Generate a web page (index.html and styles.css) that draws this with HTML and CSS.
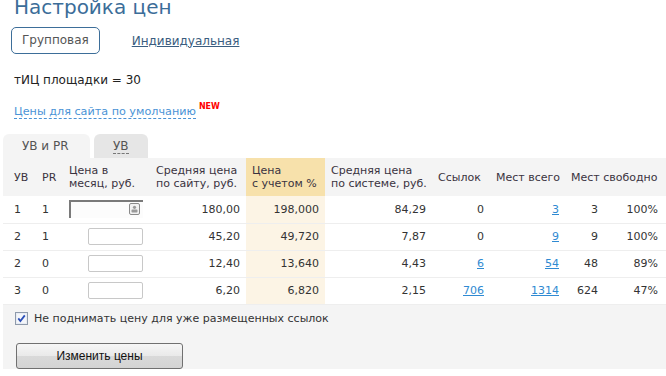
FILE: index.html
```html
<html>
<head>
  <link rel="stylesheet" href="styles.css">
</head>
<body>
  <div class="page-head">
    <h1 class="page-title">Настройка цен</h1>

    <!-- Mode switch -->
    <div class="mode-switch">
      <span class="mode-btn">Групповая</span>
      <a class="mode-link" href="#">Индивидуальная</a>
    </div>

    <p class="tic">тИЦ площадки = 30</p>
    <p class="defaults"><a class="dash-link" href="#">Цены для сайта по умолчанию</a><sup class="new">NEW</sup></p>
  </div>

  <!-- Tabs -->
  <div class="tabs">
    <div class="tab tab-active">УВ и PR</div>
    <div class="tab"><span class="tab-dash">УВ</span></div>
  </div>

  <!-- Price table -->
  <table class="prices">
    <colgroup>
      <col style="width: 33px">
      <col style="width: 27px">
      <col style="width: 87px">
      <col style="width: 96px">
      <col style="width: 79px">
      <col style="width: 107px">
      <col style="width: 58px">
      <col style="width: 75px">
      <col style="width: 39px">
      <col style="width: 62px">
    </colgroup>
    <thead>
      <tr>
        <th>УВ</th>
        <th>PR</th>
        <th>Цена в<br>месяц, руб.</th>
        <th>Средняя цена<br>по сайту, руб.</th>
        <th class="hl">Цена<br>с учетом %</th>
        <th>Средняя цена<br>по системе, руб.</th>
        <th>Ссылок</th>
        <th>Мест всего</th>
        <th colspan="2">Мест свободно</th>
      </tr>
    </thead>
    <tbody>
      <tr>
        <td>1</td>
        <td>1</td>
        <td class="num"><span class="price-input focused"><span class="key-icon"><svg width="11" height="12" viewBox="0 0 11 12"><rect x="0.5" y="0.5" width="10" height="11" rx="1.5" fill="#f2f2f2" stroke="#8a8a8a"/><circle cx="5.5" cy="4.3" r="1.6" fill="#9a9a9a"/><rect x="2.5" y="6.6" width="6" height="3" rx="0.8" fill="#9a9a9a"/></svg></span></span></td>
        <td class="num">180,00</td>
        <td class="num hl">198,000</td>
        <td class="num">84,29</td>
        <td class="num">0</td>
        <td class="num"><a href="#">3</a></td>
        <td class="num">3</td>
        <td class="num">100%</td>
      </tr>
      <tr>
        <td>2</td>
        <td>1</td>
        <td class="num"><span class="price-input"></span></td>
        <td class="num">45,20</td>
        <td class="num hl">49,720</td>
        <td class="num">7,87</td>
        <td class="num">0</td>
        <td class="num"><a href="#">9</a></td>
        <td class="num">9</td>
        <td class="num">100%</td>
      </tr>
      <tr>
        <td>2</td>
        <td>0</td>
        <td class="num"><span class="price-input"></span></td>
        <td class="num">12,40</td>
        <td class="num hl">13,640</td>
        <td class="num">4,43</td>
        <td class="num"><a href="#">6</a></td>
        <td class="num"><a href="#">54</a></td>
        <td class="num">48</td>
        <td class="num">89%</td>
      </tr>
      <tr>
        <td>3</td>
        <td>0</td>
        <td class="num"><span class="price-input"></span></td>
        <td class="num">6,20</td>
        <td class="num hl">6,820</td>
        <td class="num">2,15</td>
        <td class="num"><a href="#">706</a></td>
        <td class="num"><a href="#">1314</a></td>
        <td class="num">624</td>
        <td class="num">47%</td>
      </tr>
    </tbody>
  </table>

  <!-- Footer with options -->
  <div class="table-foot">
    <label class="keep-price">
      <span class="check"><svg width="13" height="13" viewBox="0 0 13 13"><rect x="0.5" y="0.5" width="12" height="12" fill="#e8ecf3" stroke="#8e9aab"/><rect x="2" y="2" width="9" height="9" fill="#f4f6fa"/><path d="M3.3 6.4 L5.4 9 L9.8 3.4" fill="none" stroke="#2b4fb8" stroke-width="1.8"/></svg></span>
      Не поднимать цену для уже размещенных ссылок
    </label>
    <button class="save-btn">Изменить цены</button>
  </div>
</body>
</html>
```

FILE: styles.css
```css
/* General styling */
body {
  margin: 0;
  background-color: #fff;
  font-family: 'DejaVu Sans', Verdana, sans-serif;
  color: #333;
  overflow: hidden;
}

a {
  color: #2f8ad2;
}

/* Page head */
.page-head {
  padding-left: 14px;
}

.page-title {
  margin: -5px 0 0 0;
  font-size: 20px;
  line-height: 24px;
  font-weight: normal;
  color: #3b6d99;
}

.mode-switch {
  display: flex;
  align-items: center;
  margin: 8px 0 0 -3px;
}

.mode-btn {
  padding: 5px 10px;
  font-size: 12px;
  line-height: 15px;
  color: #555;
  border: 1px solid #3d6e99;
  border-radius: 5px;
}

.mode-link {
  margin-left: 32px;
  font-size: 12px;
  color: #3a5d80;
}

.tic {
  margin: 18px 0 0 0;
  font-size: 12px;
  line-height: 16px;
  color: #222;
}

.defaults {
  margin: 12px 0 0 0;
  font-size: 11.2px;
  line-height: 14px;
}

.dash-link {
  color: #4a93d6;
  text-decoration: none;
  border-bottom: 1px dashed #4a93d6;
}

.new {
  margin-left: 3px;
  font-size: 8px;
  font-weight: bold;
  color: #f00;
  vertical-align: 6px;
}

/* Tabs */
.tabs {
  display: flex;
  gap: 4px;
  margin: 15px 0 0 3px;
}

.tab {
  height: 24px;
  line-height: 24px;
  padding: 0 19px;
  font-size: 12px;
  color: #555;
  background-color: #e6e6e6;
  border-radius: 6px 6px 0 0;
}

.tab-active {
  width: 49px;
  background-color: #f4f4f4;
}

.tab-dash {
  border-bottom: 1px dashed #777;
}

/* Price table */
.prices {
  margin-left: 3px;
  width: 663px;
  table-layout: fixed;
  border-collapse: collapse;
  font-size: 11px;
}

.prices th {
  padding: 6px 6px;
  height: 26px;
  line-height: 13px;
  text-align: left;
  font-weight: normal;
  color: #3a3340;
  background-color: #f4f4f4;
  white-space: nowrap;
}

.prices th.hl {
  background-color: #f7e1ab;
}

.prices td {
  height: 27px;
  padding: 0 6px;
  border-bottom: 1px solid #eeeeee;
  color: #333;
  white-space: nowrap;
}

.prices th:first-child,
.prices td:first-child {
  padding-left: 11px;
}

.prices td:last-child {
  padding-right: 8px;
}

.prices td.num {
  text-align: right;
}

.prices td.hl {
  background-color: #fcf4e5;
}

.prices td:nth-child(3) {
  padding-right: 7px;
}

.price-input {
  display: inline-block;
  vertical-align: middle;
  width: 53px;
  height: 15px;
  background: #fff;
  border: 1px solid #c8c8c8;
  border-radius: 2px;
}

.price-input.focused {
  position: relative;
  width: 72px;
  height: 16px;
  border: none;
  border-top: 2px solid #7a7a7a;
  border-left: 2px solid #7a7a7a;
  border-radius: 0;
  background: #fcfcfc;
}

.key-icon {
  position: absolute;
  right: 3px;
  top: 1px;
  line-height: 0;
}

/* Footer */
.table-foot {
  margin-left: 3px;
  width: 663px;
  height: 64px;
  background-color: #f4f4f4;
  padding-top: 7px;
  box-sizing: border-box;
}

.keep-price {
  display: flex;
  align-items: center;
  gap: 6px;
  padding-left: 12px;
  font-size: 11px;
  line-height: 14px;
  color: #333;
}

.check {
  line-height: 0;
}

.save-btn {
  display: block;
  margin: 17px 0 0 13px;
  width: 167px;
  height: 26px;
  font-family: 'Liberation Sans', Arial, sans-serif;
  font-size: 12px;
  color: #111;
  background: linear-gradient(#f6f6f6, #e9e9e9 50%, #d9d9d9 51%, #d4d4d4);
  border: 1px solid #707070;
  border-radius: 3px;
}
```
